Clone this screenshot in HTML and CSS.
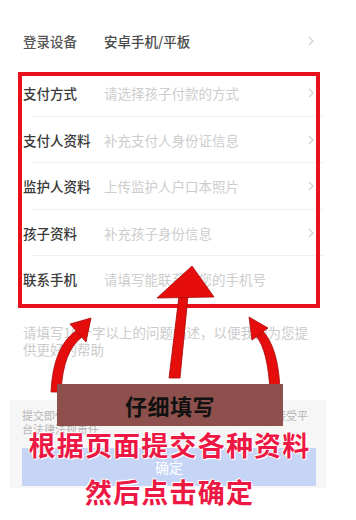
FILE: index.html
```html
<!DOCTYPE html>
<html lang="zh-CN">
<head>
<meta charset="utf-8">
<link rel="stylesheet" href="styles.css">
</head>
<body>
<div class="page">
  <div class="card">
    <div class="row login">
      <span class="label">登录设备</span>
      <span class="value dark">安卓手机/平板</span>
      <svg class="chev" viewBox="0 0 6 10" width="6" height="10"><polyline points="1,1 5,5 1,9" fill="none" stroke="#cfcfcf" stroke-width="1.2"/></svg>
    </div>
    <div class="group">
      <div class="row line">
        <span class="label">支付方式</span>
        <span class="value">请选择孩子付款的方式</span>
        <svg class="chev" viewBox="0 0 6 10" width="6" height="10"><polyline points="1,1 5,5 1,9" fill="none" stroke="#cfcfcf" stroke-width="1.2"/></svg>
      </div>
      <div class="row line">
        <span class="label">支付人资料</span>
        <span class="value">补充支付人身份证信息</span>
        <svg class="chev" viewBox="0 0 6 10" width="6" height="10"><polyline points="1,1 5,5 1,9" fill="none" stroke="#cfcfcf" stroke-width="1.2"/></svg>
      </div>
      <div class="row line">
        <span class="label">监护人资料</span>
        <span class="value">上传监护人户口本照片</span>
        <svg class="chev" viewBox="0 0 6 10" width="6" height="10"><polyline points="1,1 5,5 1,9" fill="none" stroke="#cfcfcf" stroke-width="1.2"/></svg>
      </div>
      <div class="row line">
        <span class="label">孩子资料</span>
        <span class="value">补充孩子身份信息</span>
        <svg class="chev" viewBox="0 0 6 10" width="6" height="10"><polyline points="1,1 5,5 1,9" fill="none" stroke="#cfcfcf" stroke-width="1.2"/></svg>
      </div>
      <div class="row">
        <span class="label">联系手机</span>
        <span class="value">请填写能联系到您的手机号</span>
      </div>
    </div>
    <p class="note">请填写10个字以上的问题描述，以便我们为您提供更好的帮助</p>
  </div>
  <div class="footer">
    <p class="agree">提交即代表您已阅读并承诺所填信息真实有效，同意接受平台法律法规责任</p>
    <div class="confirm">确定</div>
  </div>

  <div class="redbox"></div>
  <svg class="arrows" viewBox="0 0 356 520" width="356" height="520">
    <g fill="#e60d0d" stroke="#a80808" stroke-width="0.8">
      <path d="M51 392 Q53 346 77 330 L82 337 Q63 351 61 392 Z"/>
      <polygon points="91,318 70,324 86,342"/>
      <path d="M270 392 Q268 350 256 336 L262 330 Q279 348 280 392 Z"/>
      <polygon points="249,317 252,340 268,328"/>
      <polygon points="169,378 180,378 188,296 179,296"/>
      <polygon points="192,266 157,298 214,297"/>
    </g>
  </svg>
  <div class="tag">仔细填写</div>
  <div class="caption">根据页面提交各种资料<br>然后点击确定</div>
</div>
</body>
</html>
```
FILE: styles.css
```css
* { box-sizing: border-box; }
html, body { margin: 0; padding: 0; background: #ffffff; }
body { font-family: "Noto Sans CJK SC", "Noto Sans", sans-serif; }
.page { position: relative; width: 356px; height: 520px; overflow: hidden; padding-top: 18px; }
.card { margin: 0 28px 0 12px; }
.row { display: flex; align-items: center; height: 46px; padding: 0 11px 0 11px; position: relative; }
.group { margin-top: 6px; }
.group .row { height: 46.5px; }
.row.line::after { content: ""; position: absolute; left: 20px; right: 4px; bottom: 0; height: 1px; background: #f0f0f0; }
.label { width: 81px; flex: none; font-size: 13.5px; font-weight: 500; color: #3a3a3a; }
.login .label { color: #555555; }
.value { flex: 1; font-size: 13.5px; color: #cdcdcd; white-space: nowrap; }
.value.dark { color: #4a4a4a; font-weight: 500; }
.chev { flex: none; margin-right: 3px; }
.note { margin: 21px 0 0 11px; width: 294px; font-size: 13.5px; line-height: 17px; color: #cbcbcb; }
.footer { margin: 42.5px 30px 0 10px; background: #f6f6f7; padding: 8px 10px 2px 12px; }
.agree { margin: 0; width: 290px; font-size: 11px; line-height: 14px; color: #b5b5b5; }
.confirm { margin-top: 12px; height: 38px; background: #c6d5f6; color: #ffffff; font-size: 14px; display: flex; align-items: center; justify-content: center; }
.redbox { position: absolute; left: 18px; top: 72px; width: 302px; height: 236px; border: 4px solid #e8101a; }
.arrows { position: absolute; left: 0; top: 0; }
.tag { position: absolute; left: 57px; top: 384px; width: 226px; height: 42px; background: #8e504c; color: #111111; font-size: 22px; font-weight: 700; display: flex; align-items: center; justify-content: center; letter-spacing: 0.5px; }
.caption { position: absolute; left: 0; top: 421px; width: 339px; text-align: center; font-size: 27px; font-weight: 700; line-height: 47px; letter-spacing: 1.2px; color: #ee1844; text-shadow: 0 0 2px #fff, 0 0 2px #fff, 1px 1px 0 #fff, -1px -1px 0 #fff; }
```
